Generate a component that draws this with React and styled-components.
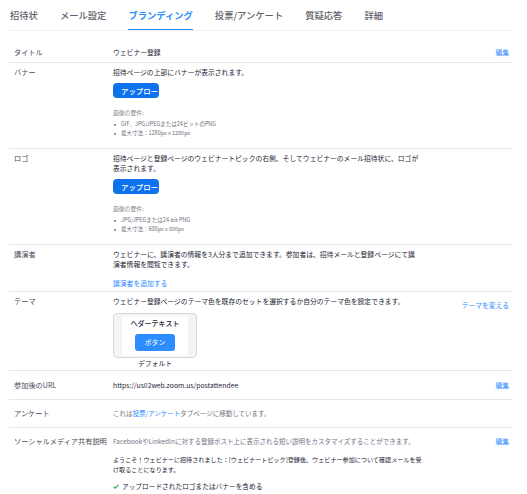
import React from 'react';
import styled, { createGlobalStyle } from 'styled-components';

const Global = createGlobalStyle`
  html, body {
    margin: 0;
    padding: 0;
    background: #ffffff;
  }
  body {
    font-family: 'Noto Sans CJK JP', 'Noto Sans', sans-serif;
    color: #232333;
  }
`;

const Page = styled.div`
  width: 503px;
  margin-left: 9px;
`;

const Tabs = styled.div`
  display: flex;
  gap: 22px;
  height: 31px;
  padding-left: 1px;
  border-bottom: 1px solid #f1f1f3;
  box-sizing: border-box;
`;

const Tab = styled.div`
  font-size: 9.3px;
  line-height: 30px;
  font-weight: ${props => (props.$active ? 700 : 500)};
  color: ${props => (props.$active ? '#2d8cff' : '#5f5f6b')};
  border-bottom: 1.5px solid ${props => (props.$active ? '#2d8cff' : 'transparent')};
  height: 30px;
  box-sizing: border-box;
  white-space: nowrap;
`;

const Table = styled.div`
  padding-top: 16px;
`;

const Row = styled.div`
  display: flex;
  align-items: flex-start;
  padding: ${props => props.$pad || '4px 3px 10px 5px'};
  border-bottom: ${props => (props.$last ? 'none' : '1px solid #e8e8ec')};
`;

const Label = styled.div`
  width: 99px;
  flex: none;
  font-size: 7.2px;
  line-height: 10px;
  color: #4a4a55;
  white-space: nowrap;
`;

const Content = styled.div`
  flex: 1;
  min-width: 0;
`;

const Text = styled.div`
  font-size: ${props => props.$size || '6.8px'};
  line-height: 10px;
  height: ${props => (props.$lines || 1) * 10}px;
  color: #232333;
  white-space: nowrap;
`;

const Muted = styled.div`
  font-size: 6.5px;
  line-height: 10px;
  height: 10px;
  color: #747487;
  white-space: nowrap;
`;

const Link = styled.a`
  color: #2d8cff;
  text-decoration: none;
  cursor: pointer;
`;

const Side = styled.div`
  flex: none;
  font-size: 6.8px;
  line-height: 10px;
  margin-top: ${props => props.$top || '0'};
  white-space: nowrap;
`;

const UploadButton = styled.button`
  display: block;
  width: 46px;
  height: 15px;
  margin-top: ${props => props.$top || '7px'};
  padding: 0 0 0 8px;
  border: none;
  border-radius: 4px;
  background: #0e72ed;
  color: #ffffff;
  font-family: inherit;
  font-size: 7.4px;
  line-height: 15px;
  font-weight: 500;
  text-align: left;
  white-space: nowrap;
`;

const ReqTitle = styled.div`
  margin-top: 10px;
  height: 10px;
  font-size: 5.8px;
  line-height: 10px;
  color: #8a8a96;
`;

const ReqList = styled.ul`
  margin: 2px 0 0;
  padding: 0 0 0 8px;
  list-style: none;
  color: #6e6e7a;
`;

const ReqItem = styled.li`
  position: relative;
  height: 9px;
  font-size: 5.5px;
  line-height: 9px;
  white-space: nowrap;

  &::before {
    content: '';
    position: absolute;
    left: -7px;
    top: 3.5px;
    width: 2px;
    height: 2px;
    border-radius: 50%;
    background: #6e6e7a;
  }
`;

const AddLink = styled.div`
  margin-top: 9px;
  height: 10px;
  font-size: 6.8px;
  line-height: 10px;
`;

const ThemeCard = styled.div`
  width: 84px;
  margin-top: 7px;
`;

const ThemeFrame = styled.div`
  height: 45px;
  padding: 2px 8px 1px;
  box-sizing: border-box;
  border: 1px solid #d6d6dc;
  border-radius: 4px;
  background: #f4f4f6;
`;

const ThemeInner = styled.div`
  height: 100%;
  background: #ffffff;
  display: flex;
  flex-direction: column;
  align-items: center;
`;

const ThemeHeading = styled.div`
  margin-top: 2px;
  font-size: 7px;
  line-height: 10px;
  font-weight: 500;
  color: #232333;
`;

const ThemeButton = styled.div`
  margin-top: 6px;
  width: 40px;
  height: 17px;
  border-radius: 3px;
  background: #2d8cff;
  color: #ffffff;
  font-size: 6.8px;
  line-height: 17px;
  text-align: center;
`;

const ThemeName = styled.div`
  text-align: center;
  height: 10px;
  font-size: 6.8px;
  line-height: 10px;
  color: #232333;
`;

const Welcome = styled(Text)`
  margin-top: 9px;
`;

const Check = styled.div`
  display: flex;
  align-items: center;
  gap: 3px;
  margin-top: 6px;
  height: 10px;
  font-size: 6.7px;
  line-height: 10px;
  white-space: nowrap;
`;

const CheckIcon = () => (
  <svg width="6" height="5" viewBox="0 0 6 5">
    <path d="M0.6 2.6 L2.3 4.2 L5.4 0.8" fill="none" stroke="#23b15a" strokeWidth="1.1" />
  </svg>
);

const tabs = ['招待状', 'メール設定', 'ブランディング', '投票/アンケート', '質疑応答', '詳細'];

export default function App() {
  return (
    <>
      <Global />
      <Page>
        <Tabs>
          {tabs.map(t => (
            <Tab key={t} $active={t === 'ブランディング'}>{t}</Tab>
          ))}
        </Tabs>

        <Table>
          <Row $pad="0 3px 5px 5px">
            <Label>タイトル</Label>
            <Content>
              <Text>ウェビナー登録</Text>
            </Content>
            <Side><Link>編集</Link></Side>
          </Row>

          <Row $pad="4px 3px 10px 5px">
            <Label>バナー</Label>
            <Content>
              <Text>招待ページの上部にバナーが表示されます。</Text>
              <UploadButton $top="6px">アップロー</UploadButton>
              <ReqTitle>画像の要件:</ReqTitle>
              <ReqList>
                <ReqItem>GIF、JPG/JPEGまたは24ビットのPNG</ReqItem>
                <ReqItem>最大寸法：1280px x 1280px</ReqItem>
              </ReqList>
            </Content>
          </Row>

          <Row $pad="4px 3px 10px 5px">
            <Label>ロゴ</Label>
            <Content>
              <Text $lines={2}>
                招待ページと登録ページのウェビナートピックの右側、そしてウェビナーのメール招待状に、ロゴが
                <br />
                表示されます。
              </Text>
              <UploadButton $top="6px">アップロー</UploadButton>
              <ReqTitle>画像の要件:</ReqTitle>
              <ReqList>
                <ReqItem>JPG/JPEGまたは24-bit PNG</ReqItem>
                <ReqItem>最大寸法：600px x 600px</ReqItem>
              </ReqList>
            </Content>
          </Row>

          <Row $pad="4px 3px 3px 5px">
            <Label>講演者</Label>
            <Content>
              <Text $lines={2}>
                ウェビナーに、講演者の情報を3人分まで追加できます。参加者は、招待メールと登録ページにて講
                <br />
                演者情報を閲覧できます。
              </Text>
              <AddLink><Link>講演者を追加する</Link></AddLink>
            </Content>
          </Row>

          <Row $pad="4px 3px 2px 5px">
            <Label>テーマ</Label>
            <Content>
              <Text>ウェビナー登録ページのテーマ色を既存のセットを選択するか自分のテーマ色を設定できます。</Text>
              <ThemeCard>
                <ThemeFrame>
                  <ThemeInner>
                    <ThemeHeading>ヘダーテキスト</ThemeHeading>
                    <ThemeButton>ボタン</ThemeButton>
                  </ThemeInner>
                </ThemeFrame>
                <ThemeName>デフォルト</ThemeName>
              </ThemeCard>
            </Content>
            <Side $top="4px"><Link>テーマを変える</Link></Side>
          </Row>

          <Row $pad="9px 3px 9px 5px">
            <Label>参加後のURL</Label>
            <Content>
              <Text>https://us02web.zoom.us/postattendee</Text>
            </Content>
            <Side><Link>編集</Link></Side>
          </Row>

          <Row $pad="8px 3px 9px 5px">
            <Label>アンケート</Label>
            <Content>
              <Muted>これは<Link>投票/アンケート</Link>タブページに移動しています。</Muted>
            </Content>
          </Row>

          <Row $pad="8px 3px 10px 5px" $last>
            <Label>ソーシャルメディア共有説明</Label>
            <Content>
              <Muted>FacebookやLinkedInに対する登録ポスト上に表示される短い説明をカスタマイズすることができます。</Muted>
              <Welcome $lines={2} $size="6.1px">
                ようこそ！ウェビナーに招待されました：[ウェビナートピック]登録後、ウェビナー参加について確認メールを受
                <br />
                け取ることになります。
              </Welcome>
              <Check>
                <CheckIcon />
                アップロードされたロゴまたはバナーを含める
              </Check>
            </Content>
            <Side><Link>編集</Link></Side>
          </Row>
        </Table>
      </Page>
    </>
  );
}
